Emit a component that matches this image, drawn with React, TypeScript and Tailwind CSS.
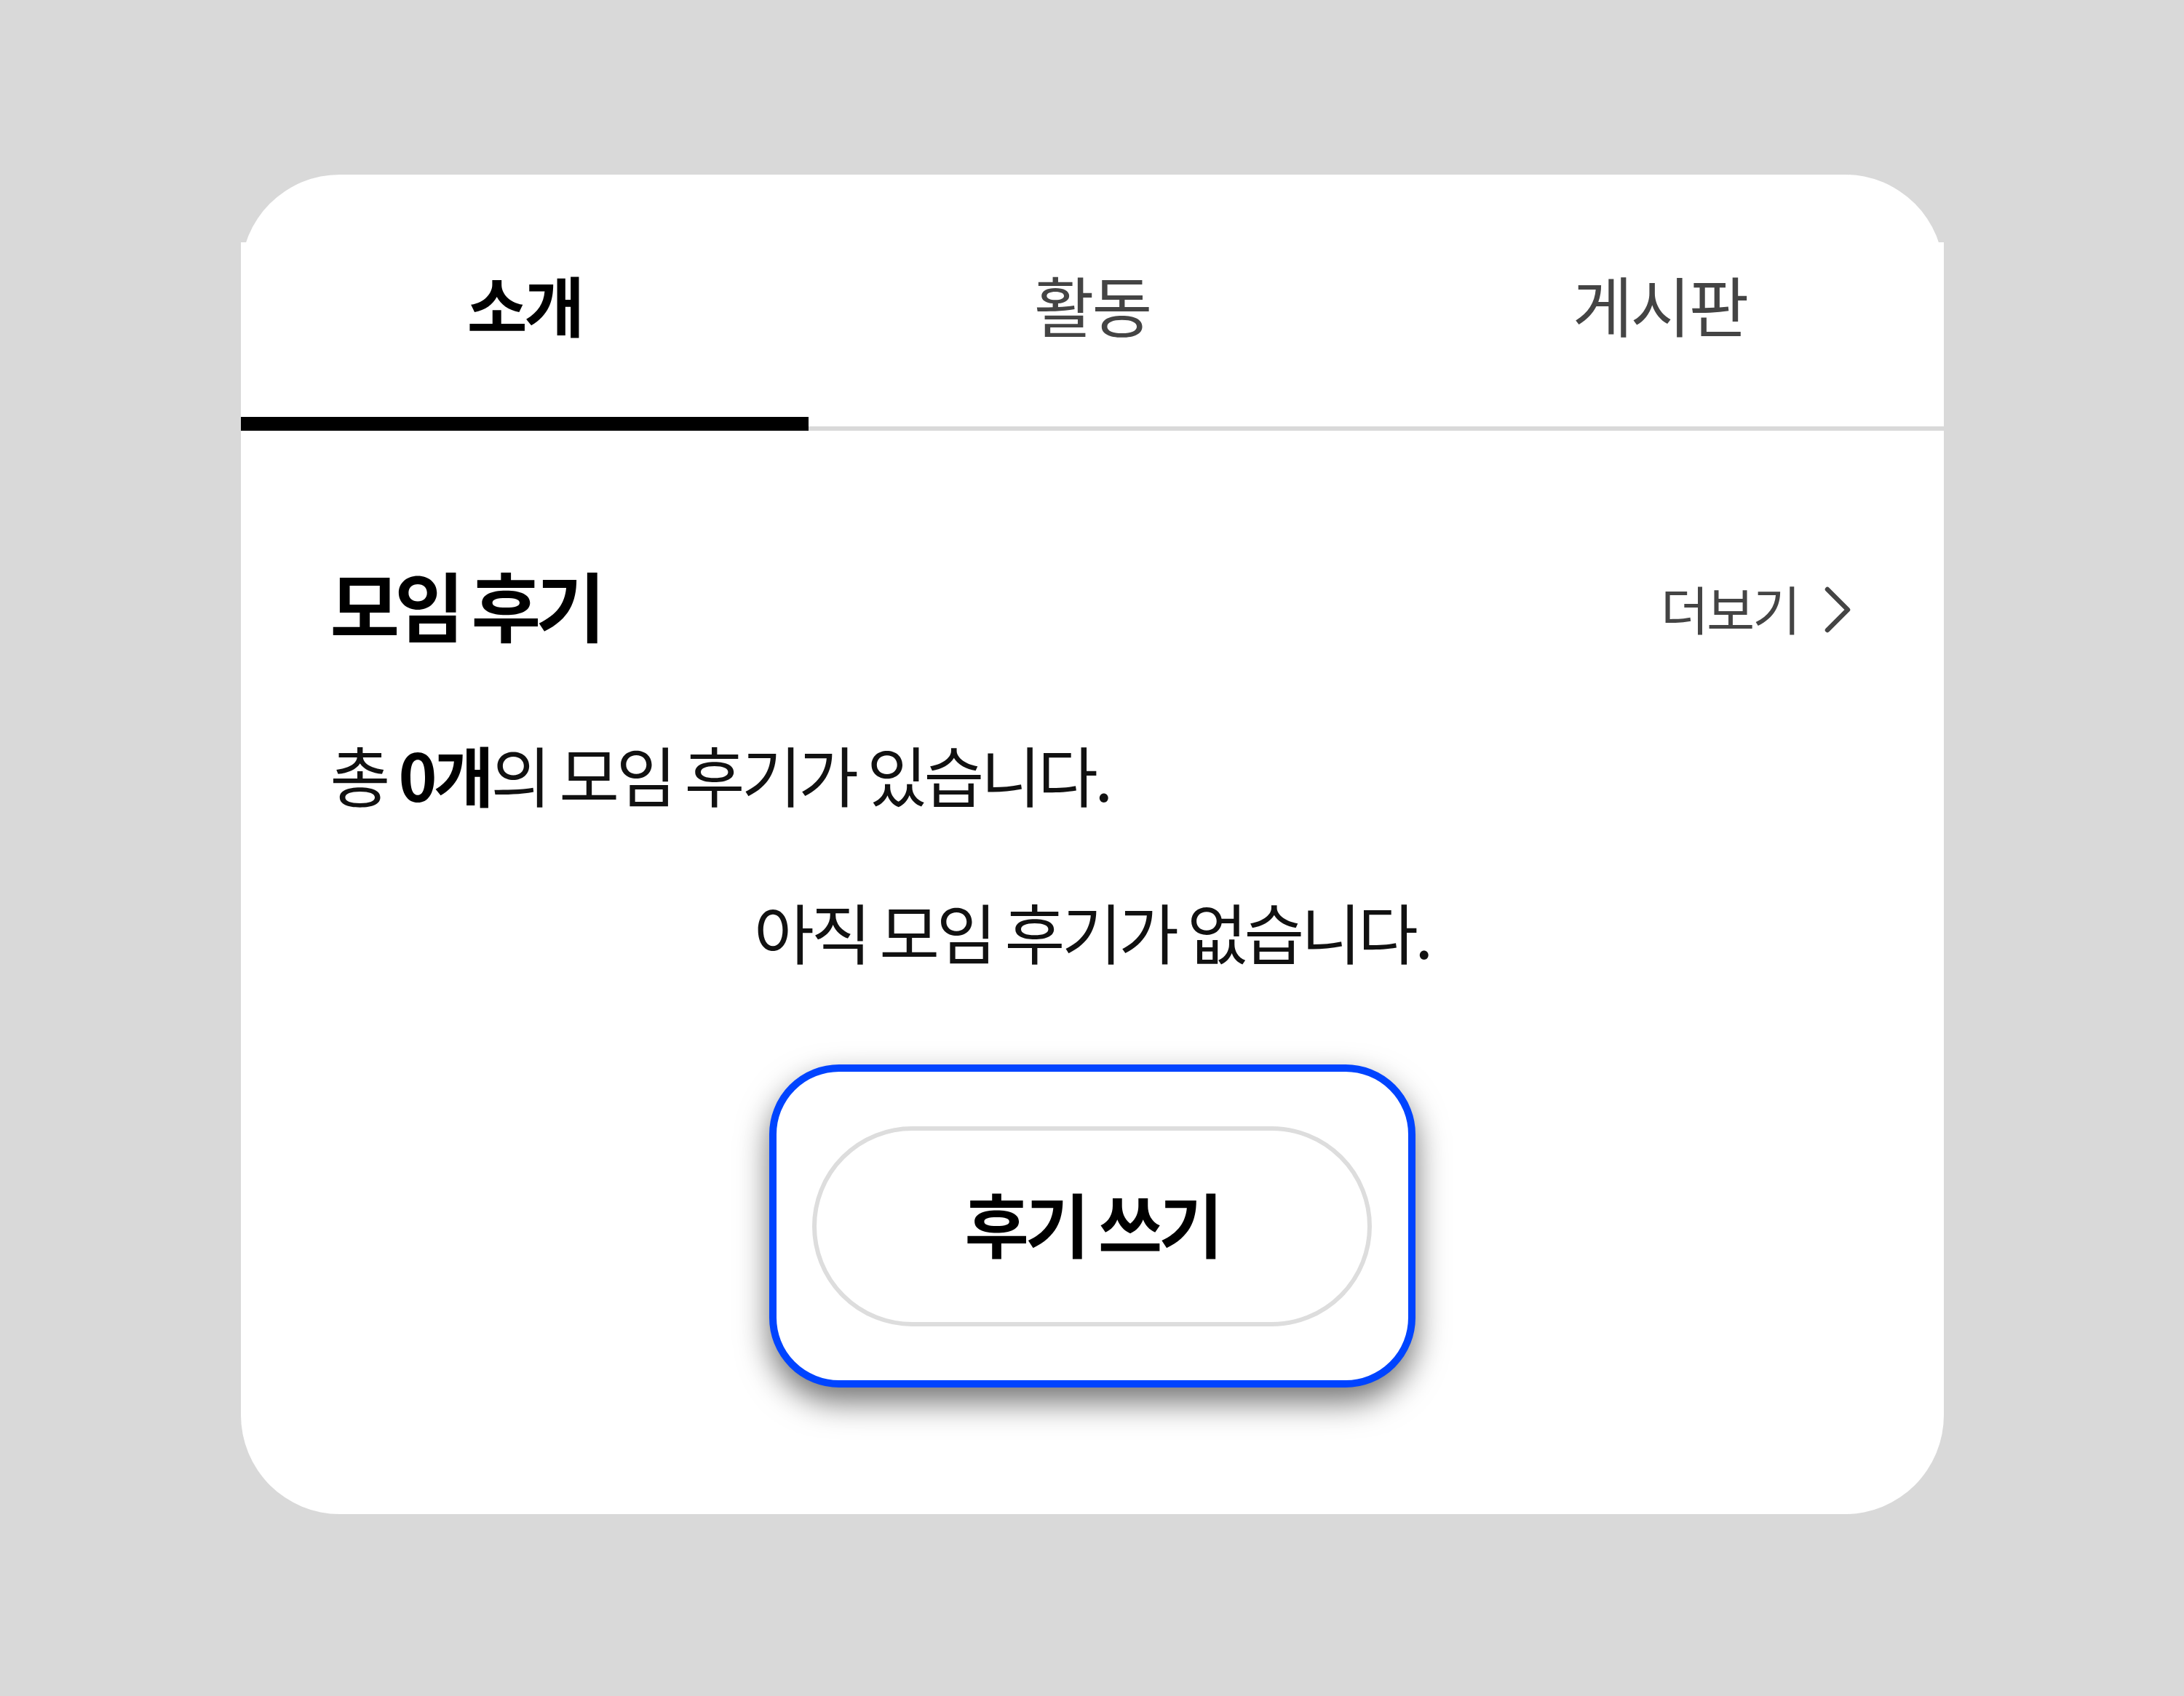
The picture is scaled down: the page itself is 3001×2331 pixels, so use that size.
const font = { fontFamily: '"Noto Sans CJK KR", "Noto Sans", sans-serif' };

function Tab({ label, active }: { label: string; active?: boolean }) {
  return (
    <div className="relative flex h-[253px] justify-center pt-[34px]">
      <span
        className={
          active
            ? "text-[90px] leading-[100px] font-bold text-black tracking-[-4px]"
            : "text-[90px] leading-[100px] font-normal text-[#444444] tracking-[-3px]"
        }
      >
        {label}
      </span>
      {active && <div className="absolute left-0 right-0 -bottom-[6px] h-[19px] bg-black" />}
    </div>
  );
}

export default function App() {
  return (
    <div className="w-[3001px] h-[2331px] bg-[#d9d9d9] pt-[240px]" style={font}>
      <div className="mx-auto w-[2340px] rounded-[136px] bg-white pt-[93px] pb-[174px]">
        {/* Tabs */}
        <div className="grid grid-cols-3 border-b-[6px] border-[#d9d9d9] bg-white">
          <Tab label="소개" active />
          <Tab label="활동" />
          <Tab label="게시판" />
        </div>

        <div className="px-[123px]">
          {/* Section header */}
          <div className="mt-[178px] flex h-[120px] items-center justify-between">
            <h2 className="text-[104px] leading-[120px] font-bold text-black tracking-[-7px]">모임 후기</h2>
            <button className="mt-[10px] flex items-center gap-[34px] pr-[4px] text-[72px] leading-[90px] text-[#444444] tracking-[-3px]">
              더보기
              <svg width="38" height="66" viewBox="0 0 38 66" fill="none" className="mt-[6px]">
                <polyline
                  points="5,5 33,33 5,61"
                  stroke="#444444"
                  strokeWidth="6.5"
                  strokeLinecap="round"
                  strokeLinejoin="round"
                />
              </svg>
            </button>
          </div>

          <p className="mt-[113px] text-[90px] leading-[120px] text-[#111111] tracking-[-4.5px]">
            총 <span className="font-bold text-black">0개</span>의 모임 후기가 있습니다.
          </p>

          <p className="mt-[96px] text-center text-[90px] leading-[120px] text-[#111111] tracking-[-4.5px]">
            아직 모임 후기가 없습니다.
          </p>

          {/* Write review button */}
          <div className="mt-[124px] flex justify-center">
            <div className="flex h-[444px] w-[888px] items-center justify-center rounded-[96px] border-[10px] border-[#0044ff] bg-white shadow-[0_20px_44px_rgba(0,0,0,0.55)]">
              <button className="flex h-[275px] w-[769px] items-center justify-center rounded-full border-[6px] border-[#dddddd] bg-white pb-[10px] text-[96px] leading-[110px] font-bold text-black tracking-[-5px]">
                후기 쓰기
              </button>
            </div>
          </div>
        </div>
      </div>
    </div>
  );
}
